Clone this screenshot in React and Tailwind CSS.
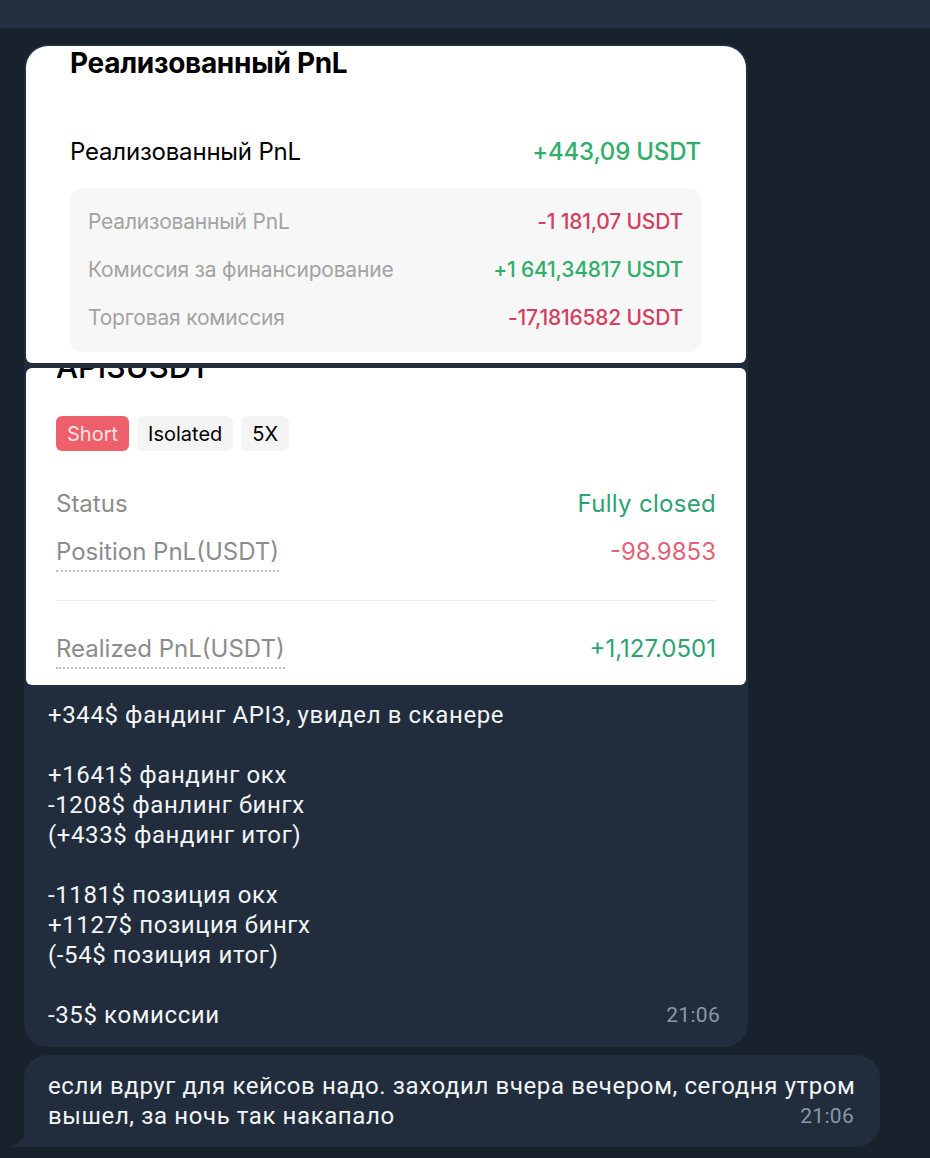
import React from 'react'

const tg = { fontFamily: 'Roboto, "Noto Sans", sans-serif' }
const okx = { fontFamily: 'Inter, "Noto Sans", sans-serif' }

function Row({ label, value, color }) {
  return (
    <div className="flex h-12 items-center justify-between text-[21px] tracking-[-0.2px]">
      <span className="text-[#a3a3a3]">{label}</span>
      <span className={`font-medium ${color}`}>{value}</span>
    </div>
  )
}

function PnlShot() {
  return (
    <div
      className="h-[317px] overflow-hidden rounded-t-[22px] rounded-b-[6px] bg-white pl-[44px] pr-[45px]"
      style={okx}
    >
      <div className="text-[28px] font-bold leading-[34px] tracking-[-0.3px] text-black">
        Реализованный PnL
      </div>
      <div className="mt-[56px] flex h-[32px] items-center justify-between text-[24px] tracking-[-0.2px]">
        <span className="text-black">Реализованный PnL</span>
        <span className="font-medium text-[#2fae69]">+443,09 USDT</span>
      </div>
      <div className="mt-[20px] rounded-[12px] bg-[#f7f7f7] px-[18px] py-[10px]">
        <Row label="Реализованный PnL" value="-1 181,07 USDT" color="text-[#d4405e]" />
        <Row label="Комиссия за финансирование" value="+1 641,34817 USDT" color="text-[#2fae69]" />
        <Row label="Торговая комиссия" value="-17,1816582 USDT" color="text-[#d4405e]" />
      </div>
    </div>
  )
}

function PositionShot() {
  return (
    <div className="mt-[5px] h-[317px] overflow-hidden rounded-[6px] bg-white px-[30px]" style={okx}>
      <div className="-mt-[20px] text-[31px] font-medium leading-[38px] text-black">API3USDT</div>
      <div className="mt-[30px] flex gap-[8px] text-[20px]">
        <span className="flex h-[35px] items-center rounded-[6px] bg-[#ee5f6c] px-[11px] text-[#fde4e6]">Short</span>
        <span className="flex h-[35px] items-center rounded-[6px] bg-[#f4f4f4] px-[11px] text-black">Isolated</span>
        <span className="flex h-[35px] items-center rounded-[6px] bg-[#f4f4f4] px-[11px] text-black">5X</span>
      </div>
      <div className="mt-[35px] flex h-[36px] items-center justify-between text-[24px]">
        <span className="text-[#8c8c8c]">Status</span>
        <span className="tracking-[0.3px] text-[#2da274]">Fully closed</span>
      </div>
      <div className="mt-[16px] flex items-start justify-between text-[24px]">
        <span className="border-b-2 border-dotted border-[#bdbdbd] pb-[4px] leading-[28px] text-[#8c8c8c]">
          Position PnL(USDT)
        </span>
        <span className="leading-[28px] text-[#e0647a]">-98.9853</span>
      </div>
      <div className="mt-[28px] h-px bg-[#efefef]" />
      <div className="mt-[34px] flex items-start justify-between text-[24px]">
        <span className="border-b-2 border-dotted border-[#bdbdbd] pb-[4px] leading-[28px] text-[#8c8c8c]">
          Realized PnL(USDT)
        </span>
        <span className="leading-[28px] text-[#2da274]">+1,127.0501</span>
      </div>
    </div>
  )
}

const lines = [
  '+344$ фандинг API3, увидел в сканере',
  '',
  '+1641$ фандинг окх',
  '-1208$ фанлинг бингх',
  '(+433$ фандинг итог)',
  '',
  '-1181$ позиция окх',
  '+1127$ позиция бингх',
  '(-54$ позиция итог)',
  '',
]

export default function App() {
  return (
    <div className="min-h-[1158px] w-[930px] overflow-hidden bg-[#18222d]" style={tg}>
      <div className="h-[28px] bg-[#23303f]" />

      <div className="ml-[24px] mt-[16px] w-[724px] rounded-[24px] bg-[#212d3c] p-[2px]">
        <PnlShot />
        <PositionShot />
        <div className="pb-[15px] pl-[22px] pr-[26px] pt-[15px] text-[24px] leading-[30px] tracking-[0.6px] text-[#f2f4f6]">
          {lines.map((l, i) => (
            <div key={i} className="h-[30px]">{l}</div>
          ))}
          <div className="flex justify-between">
            <span>-35$ комиссии</span>
            <span className="text-[21px] tracking-[0.3px] text-[#8798ab]">21:06</span>
          </div>
        </div>
      </div>

      <div className="relative ml-[24px] mt-[8px] w-[856px] rounded-[24px] rounded-bl-none bg-[#212d3c] py-[16px] pl-[24px] pr-[26px] text-[24px] leading-[30px] tracking-[0.6px] text-[#f2f4f6]">
        <svg className="absolute -left-[14px] bottom-0" width="16" height="22" viewBox="0 0 16 22">
          <path d="M16 0 C16 10 12 18 0 22 H16 Z" fill="#212d3c" />
        </svg>
        <div className="whitespace-nowrap">если вдруг для кейсов надо. заходил вчера вечером, сегодня утром</div>
        <div className="flex justify-between">
          <span>вышел, за ночь так накапало</span>
          <span className="text-[21px] tracking-[0.3px] text-[#8798ab]">21:06</span>
        </div>
      </div>
    </div>
  )
}
